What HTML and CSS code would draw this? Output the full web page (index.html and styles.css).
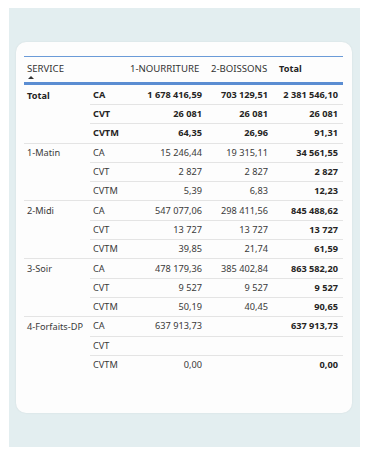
FILE: index.html
```html
<!DOCTYPE html>
<html lang="fr">
<head>
<meta charset="utf-8">
<link rel="stylesheet" href="styles.css">
</head>
<body>
<div class="panel">
  <div class="card">
    <table class="matrix">
      <colgroup>
        <col class="c-a"><col class="c-b"><col class="c-c"><col class="c-d"><col class="c-e">
      </colgroup>
      <thead>
        <tr>
          <th class="h-service">SERVICE<span class="caret"></span></th>
          <th></th>
          <th class="h-col">1-NOURRITURE</th>
          <th class="h-col">2-BOISSONS</th>
          <th class="h-col h-total">Total</th>
        </tr>
      </thead>
      <tbody class="grp total-grp">
        <tr><td class="lbl" rowspan="3">Total</td><td class="m">CA</td><td class="v">1 678 416,59</td><td class="v">703 129,51</td><td class="v">2 381 546,10</td></tr>
        <tr><td class="m">CVT</td><td class="v">26 081</td><td class="v">26 081</td><td class="v">26 081</td></tr>
        <tr><td class="m">CVTM</td><td class="v">64,35</td><td class="v">26,96</td><td class="v">91,31</td></tr>
      </tbody>
      <tbody class="grp">
        <tr><td class="lbl" rowspan="3">1-Matin</td><td class="m">CA</td><td class="v">15 246,44</td><td class="v">19 315,11</td><td class="v t">34 561,55</td></tr>
        <tr><td class="m">CVT</td><td class="v">2 827</td><td class="v">2 827</td><td class="v t">2 827</td></tr>
        <tr><td class="m">CVTM</td><td class="v">5,39</td><td class="v">6,83</td><td class="v t">12,23</td></tr>
      </tbody>
      <tbody class="grp">
        <tr><td class="lbl" rowspan="3">2-Midi</td><td class="m">CA</td><td class="v">547 077,06</td><td class="v">298 411,56</td><td class="v t">845 488,62</td></tr>
        <tr><td class="m">CVT</td><td class="v">13 727</td><td class="v">13 727</td><td class="v t">13 727</td></tr>
        <tr><td class="m">CVTM</td><td class="v">39,85</td><td class="v">21,74</td><td class="v t">61,59</td></tr>
      </tbody>
      <tbody class="grp">
        <tr><td class="lbl" rowspan="3">3-Soir</td><td class="m">CA</td><td class="v">478 179,36</td><td class="v">385 402,84</td><td class="v t">863 582,20</td></tr>
        <tr><td class="m">CVT</td><td class="v">9 527</td><td class="v">9 527</td><td class="v t">9 527</td></tr>
        <tr><td class="m">CVTM</td><td class="v">50,19</td><td class="v">40,45</td><td class="v t">90,65</td></tr>
      </tbody>
      <tbody class="grp last">
        <tr><td class="lbl" rowspan="3">4-Forfaits-DP</td><td class="m">CA</td><td class="v">637 913,73</td><td class="v"></td><td class="v t">637 913,73</td></tr>
        <tr><td class="m">CVT</td><td class="v"></td><td class="v"></td><td class="v t"></td></tr>
        <tr><td class="m">CVTM</td><td class="v">0,00</td><td class="v"></td><td class="v t">0,00</td></tr>
      </tbody>
    </table>
  </div>
</div>
</body>
</html>
```

FILE: styles.css
```css
html, body {
  margin: 0;
  padding: 0;
  background: #ffffff;
}

body {
  font-family: "Noto Sans", "Open Sans", sans-serif;
  color: #333333;
}

.panel {
  margin: 8px 8px 0 9px;
  width: 351px;
  height: 439px;
  background: #e3eef0;
  box-sizing: border-box;
  padding: 34px 8px 0 7px;
}

.card {
  height: 371px;
  background: #fdfdfd;
  border-radius: 10px;
  box-sizing: border-box;
  padding: 14px 9px 0 8px;
  box-shadow: 0 0 2px rgba(0, 0, 0, 0.08);
}

.matrix {
  width: 319px;
  table-layout: fixed;
  border-collapse: collapse;
  font-size: 9.2px;
}

.c-a { width: 66px; }
.c-b { width: 35px; }
.c-c { width: 81px; }
.c-d { width: 67px; }
.c-e { width: 70px; }

.matrix thead tr {
  border-top: 1px solid #6b9bd8;
  border-bottom: 3px solid #5b8dd2;
}

.matrix th {
  height: 27px;
  box-sizing: border-box;
  padding: 6px 0 0 0;
  vertical-align: top;
  text-align: left;
  font-weight: normal;
  font-size: 9.6px;
  line-height: 12px;
  color: #333333;
  white-space: nowrap;
}

.h-service {
  padding-left: 3px !important;
}

.caret {
  display: block;
  width: 0;
  height: 0;
  margin: 1px 0 0 1px;
  border-left: 3px solid transparent;
  border-right: 3px solid transparent;
  border-bottom: 3px solid #333333;
}

.h-col {
  padding-left: 5px !important;
}

.h-total {
  padding-left: 6px !important;
  font-weight: bold !important;
  font-size: 9.2px !important;
  color: #252423 !important;
}

.matrix td {
  height: 19.3px;
  box-sizing: border-box;
  padding: 0;
  line-height: 12px;
  white-space: nowrap;
  color: #3a3a3a;
  vertical-align: middle;
}

.matrix td.m,
.matrix td.v {
  border-bottom: 1px solid #e4e4e4;
}

.matrix td.lbl {
  vertical-align: top;
  padding: 3.6px 0 0 3px;
  border-bottom: 1px solid #e4e4e4;
}

.total-grp tr:first-child td {
  height: 21px;
}

.total-grp td.lbl {
  padding-top: 4.5px;
}

.matrix td.m {
  padding-left: 3px;
}

.matrix td.v {
  text-align: right;
}

.matrix tr td.v:nth-last-child(3) {
  padding-right: 4px;
}

.matrix tr td.v:nth-last-child(2) {
  padding-right: 5px;
}

.matrix tr td.v:last-child {
  padding-right: 5px;
}

.matrix td.t,
.total-grp td {
  font-weight: bold;
  color: #252423;
}

.last tr:last-child td,
.last td.lbl {
  border-bottom: none;
}
```
